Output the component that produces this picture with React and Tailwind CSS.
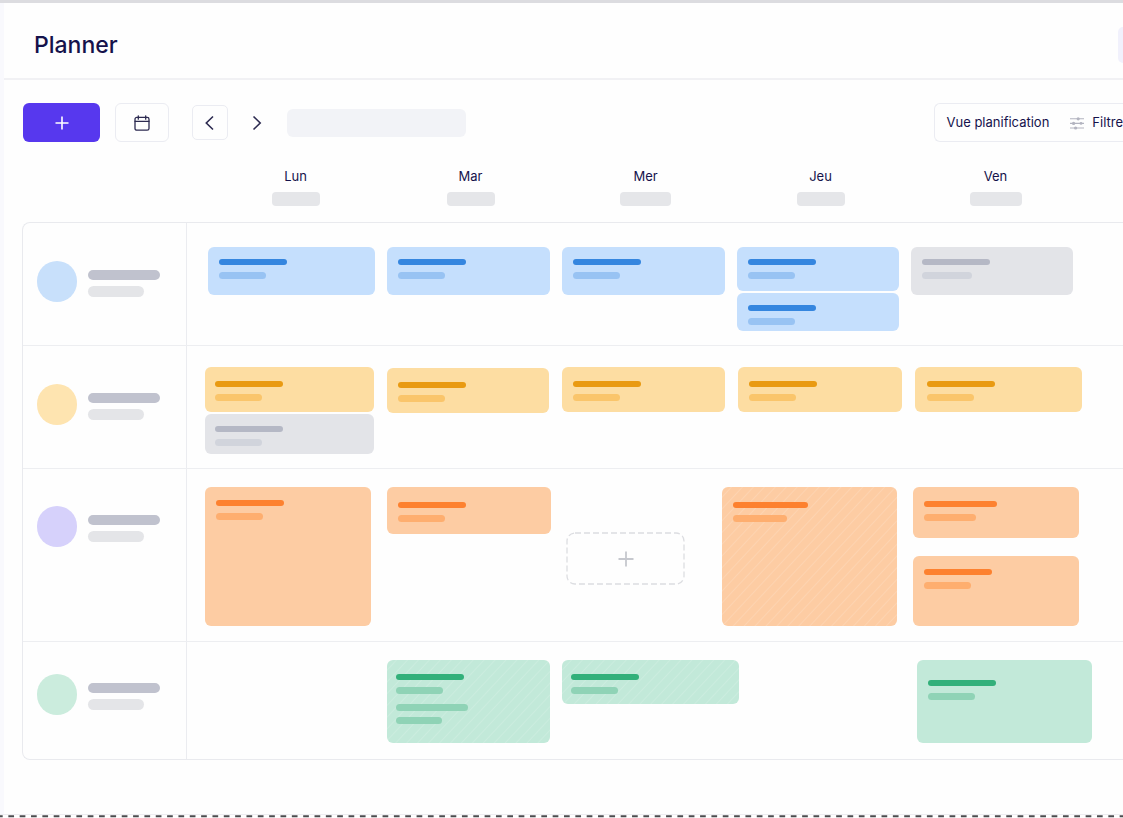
import React from 'react';

const days = [
  { name: 'Lun', pill: 'w-12' },
  { name: 'Mar', pill: 'w-12' },
  { name: 'Mer', pill: 'w-[51px]' },
  { name: 'Jeu', pill: 'w-12' },
  { name: 'Ven', pill: 'w-[52px]' },
];

const tones = {
  blue: { card: 'bg-[#c5dffd]', title: 'bg-[#3586df]', sub: 'bg-[#98c3f3]' },
  amber: { card: 'bg-[#fddda2]', title: 'bg-[#e99a12]', sub: 'bg-[#fac56b]' },
  gray: { card: 'bg-[#e3e4e8]', title: 'bg-[#b5b8c5]', sub: 'bg-[#d1d4dc]' },
  orange: { card: 'bg-[#fdcca3]', title: 'bg-[#fd812f]', sub: 'bg-[#feae6f]' },
  green: { card: 'bg-[#c2e9d9]', title: 'bg-[#32b07a]', sub: 'bg-[#8fd3b6]' },
};

const GRID = 'grid grid-cols-[164px_repeat(5,minmax(175px,1fr))_61px]';

// each row holds one cell per day, each cell a stack of cards
const rows = [
  {
    avatar: 'bg-[#c8e0fb]',
    person: 'pt-[38px]',
    height: 'min-h-[123px]',
    cells: [
      { pad: 'pt-6 pl-[21px]', cards: [{ tone: 'blue', box: 'w-[167px] h-12 pt-3 pl-[11px]' }] },
      { pad: 'pt-6 pl-[25px]', cards: [{ tone: 'blue', box: 'w-[163px] h-12 pt-3 pl-[11px]' }] },
      { pad: 'pt-6 pl-[25px]', cards: [{ tone: 'blue', box: 'w-[163px] h-12 pt-3 pl-[11px]' }] },
      {
        pad: 'pt-6 pl-[25px]',
        cards: [
          { tone: 'blue', box: 'w-[162px] h-11 pt-3 pl-[11px]' },
          { tone: 'blue', box: 'w-[162px] h-[38px] pt-3 pl-[11px]' },
        ],
      },
      { pad: 'pt-6 pl-6', cards: [{ tone: 'gray', box: 'w-[162px] h-12 pt-3 pl-[11px]', sub: 'w-[50px]' }] },
    ],
  },
  {
    avatar: 'bg-[#fee4b0]',
    person: 'pt-[38px]',
    height: 'min-h-[123px]',
    cells: [
      {
        pad: 'pt-[21px] pl-[18px]',
        cards: [
          { tone: 'amber', box: 'w-[169px] h-[45px] pt-[14px] pl-[10px]' },
          { tone: 'gray', box: 'w-[169px] h-10 pt-3 pl-[10px]' },
        ],
      },
      { pad: 'pt-[22px] pl-[25px]', cards: [{ tone: 'amber', box: 'w-[162px] h-[45px] pt-[14px] pl-[11px]' }] },
      { pad: 'pt-[21px] pl-[25px]', cards: [{ tone: 'amber', box: 'w-[163px] h-[45px] pt-[14px] pl-[11px]' }] },
      { pad: 'pt-[21px] pl-[26px]', cards: [{ tone: 'amber', box: 'w-[164px] h-[45px] pt-[14px] pl-[11px]' }] },
      { pad: 'pt-[21px] pl-[28px]', cards: [{ tone: 'amber', box: 'w-[167px] h-[45px] pt-[14px] pl-[12px]' }] },
    ],
  },
  {
    avatar: 'bg-[#d6d1fb]',
    person: 'pt-[37px]',
    height: 'min-h-[173px]',
    cells: [
      { pad: 'pt-[18px] pl-[18px]', cards: [{ tone: 'orange', box: 'w-[166px] h-[139px] pt-[13px] pl-[11px]' }] },
      { pad: 'pt-[18px] pl-[25px]', cards: [{ tone: 'orange', box: 'w-[164px] h-[47px] pt-[15px] pl-[11px]' }] },
      { pad: 'pt-[63px] pl-[29px]', add: true },
      {
        pad: 'pt-[18px] pl-[10px]',
        cards: [
          {
            tone: 'orange',
            hatched: true,
            box: 'w-[175px] h-[139px] pt-[15px] pl-[11px]',
            title: 'w-[75px]',
            sub: 'w-[54px]',
          },
        ],
      },
      {
        pad: 'pt-[18px] pl-[26px]',
        stack: 'gap-[18px]',
        cards: [
          { tone: 'orange', box: 'w-[166px] h-[51px] pt-[14px] pl-[11px]', title: 'w-[73px]', sub: 'w-[52px]' },
          { tone: 'orange', box: 'w-[166px] h-[70px] pt-[13px] pl-[11px]' },
        ],
      },
    ],
  },
  {
    avatar: 'bg-[#cbecdd]',
    person: 'pt-[32px]',
    height: 'min-h-[117px]',
    cells: [
      { pad: '' },
      {
        pad: 'pt-[18px] pl-[25px]',
        cards: [{ tone: 'green', hatched: true, extra: true, box: 'w-[163px] h-[83px] pt-[14px] pl-[9px]' }],
      },
      {
        pad: 'pt-[18px] pl-[25px]',
        cards: [{ tone: 'green', hatched: true, box: 'w-[177px] h-[44px] pt-[14px] pl-[9px]' }],
      },
      { pad: '' },
      { pad: 'pt-[18px] pl-[30px]', cards: [{ tone: 'green', box: 'w-[175px] h-[83px] pt-5 pl-[11px]' }] },
    ],
  },
];

const Hatch = () => (
  <div className="absolute inset-0 opacity-15 bg-[repeating-linear-gradient(133deg,transparent_0px,transparent_6px,white_7px,transparent_8px)]" />
);

const Card = ({ tone, box, title = 'w-[68px]', sub = 'w-[47px]', hatched, extra }) => {
  const t = tones[tone];
  return (
    <div className={`relative overflow-hidden shrink-0 rounded-md ${t.card} ${box}`}>
      {hatched && <Hatch />}
      <div className="relative flex flex-col gap-[7px]">
        <div className={`h-[6px] rounded-full ${t.title} ${title}`} />
        <div className={`h-[7px] rounded-full ${t.sub} ${sub}`} />
      </div>
      {extra && (
        <div className="relative flex flex-col gap-[6px] mt-[10px]">
          <div className={`h-[7px] w-[72px] rounded-full ${t.sub}`} />
          <div className={`h-[7px] w-[46px] rounded-full ${t.sub}`} />
        </div>
      )}
    </div>
  );
};

const AddSlot = () => (
  <button
    type="button"
    aria-label="Ajouter"
    className="relative w-[119px] h-[53px] flex items-center justify-center text-[#c6c8ce]"
  >
    <svg className="absolute inset-0 w-full h-full" viewBox="0 0 119 53" fill="none">
      <rect x="1" y="1" width="117" height="51" rx="8" stroke="#dcdde1" strokeWidth="1.3" strokeDasharray="6 3" />
    </svg>
    <svg width="16" height="16" viewBox="0 0 16 16" fill="none" stroke="currentColor" strokeWidth="1.8">
      <path d="M8 .5v15M.5 8h15" />
    </svg>
  </button>
);

const Person = ({ avatar, pad }) => (
  <div className={`flex items-start gap-[11px] pl-[14px] border-r border-[#ebecf0] ${pad}`}>
    <div className={`w-10 h-[41px] rounded-full ${avatar}`} />
    <div className="flex flex-col gap-[6px] pt-[9px]">
      <div className="w-[72px] h-[10px] rounded-full bg-[#c0c2ce]" />
      <div className="w-14 h-[11px] rounded-full bg-[#e4e5e8]" />
    </div>
  </div>
);

const Toolbar = () => (
  <div className="flex items-center h-[39px] mt-[23px] pl-[19px] text-[#2c2a50]">
    <button
      type="button"
      aria-label="Nouveau"
      className="w-[77px] h-full flex items-center justify-center rounded-md bg-[#5738ee] text-white"
    >
      <svg width="14" height="14" viewBox="0 0 14 14" fill="none" stroke="currentColor" strokeWidth="1.6">
        <path d="M7 .5v13M.5 7h13" />
      </svg>
    </button>
    <button
      type="button"
      aria-label="Calendrier"
      className="ml-[15px] w-[54px] h-full flex items-center justify-center rounded-md border border-[#ebecf2]"
    >
      <svg width="16" height="16" viewBox="0 0 16 16" fill="none" stroke="currentColor" strokeWidth="1.3" strokeLinecap="round">
        <rect x="1" y="2.4" width="14" height="12.8" rx="1.8" />
        <path d="M1 6.3h14M4.3 .8v3.4M11.7 .8v3.4" />
      </svg>
    </button>
    <button
      type="button"
      aria-label="Semaine précédente"
      className="ml-[23px] w-9 h-[35px] flex items-center justify-center rounded-[5px] border border-[#ebecf2]"
    >
      <svg width="16" height="16" viewBox="0 0 16 16" fill="none" stroke="currentColor" strokeWidth="1.6">
        <path d="M11 1.5 4.3 8l6.7 6.5" />
      </svg>
    </button>
    <button type="button" aria-label="Semaine suivante" className="ml-[11px] w-9 h-[35px] flex items-center justify-center">
      <svg width="16" height="16" viewBox="0 0 16 16" fill="none" stroke="currentColor" strokeWidth="1.6">
        <path d="m4.5 1.5 6.7 6.5-6.7 6.5" />
      </svg>
    </button>
    <div className="ml-3 w-[179px] h-7 rounded-md bg-[#f2f3f7]" />

    <div className="ml-auto h-full flex items-center pl-3 rounded-l-md border border-r-0 border-[#ebecf2] text-[13px] text-[#15124b]">
      <button type="button" className="whitespace-nowrap">Vue planification</button>
      <button type="button" className="ml-[21px] flex items-center gap-2 whitespace-nowrap">
        <svg width="14" height="14" viewBox="0 0 14 14" fill="none" stroke="#b3b4c0" strokeWidth="1.1">
          <path d="M0 2.8h14M0 7.4h14M0 12h14" />
          <g fill="#b3b4c0" stroke="none">
            <circle cx="8.2" cy="2.8" r="1.6" />
            <circle cx="3.6" cy="7.4" r="1.6" />
            <circle cx="11" cy="7.4" r="1.4" />
            <circle cx="5.6" cy="12" r="1.6" />
          </g>
        </svg>
        Filtre
      </button>
    </div>
  </div>
);

const App = () => {
  return (
    <div className="min-h-screen flex flex-col overflow-hidden bg-[#fefefe] font-['Inter',sans-serif]">
      <div className="h-[3px] bg-[#dcdce0]" />
      <div className="flex-1 border-l-4 border-[#f9f9fd]">
        <header className="flex items-center justify-between h-[77px] pl-[30px] border-b-2 border-[#f1f1f4]">
          <h1 className="text-[23px] leading-8 font-medium text-[#15124b] pt-[9px]">Planner</h1>
          <div className="w-[5px] h-9 mt-2 rounded-l-md bg-[#f1f1fc]" />
        </header>

        <Toolbar />

        <div className={`${GRID} pl-10 pt-[25px]`}>
          <div />
          {days.map((day) => (
            <div key={day.name} className="flex flex-col items-center gap-[7px]">
              <span className="text-[13px] leading-[18px] text-[#15124b]">{day.name}</span>
              <div className={`h-[14px] rounded-[4px] bg-[#e5e6e9] ${day.pill}`} />
            </div>
          ))}
        </div>

        <main className="mt-4 ml-[18px] rounded-l-lg border border-r-0 border-[#e9eaee] divide-y divide-[#edeef1]">
          {rows.map((row, i) => (
            <div key={i} className={`${GRID} ${row.height}`}>
              <Person avatar={row.avatar} pad={row.person} />
              {row.cells.map((cell, j) => (
                <div key={j} className={`min-w-0 flex flex-col ${cell.stack || 'gap-[2px]'} ${cell.pad}`}>
                  {cell.add && <AddSlot />}
                  {cell.cards && cell.cards.map((card, k) => <Card key={k} {...card} />)}
                </div>
              ))}
            </div>
          ))}
        </main>
      </div>

      {/* dashed cut line */}
      <div className="border-t border-[#ededf0]">
        <svg className="block w-full h-[3px]">
          <line x1="-3" y1="1.2" x2="100%" y2="1.2" stroke="#4b4b4e" strokeWidth="2" strokeDasharray="5.7 5.64" />
        </svg>
      </div>
    </div>
  );
};

export default App;
